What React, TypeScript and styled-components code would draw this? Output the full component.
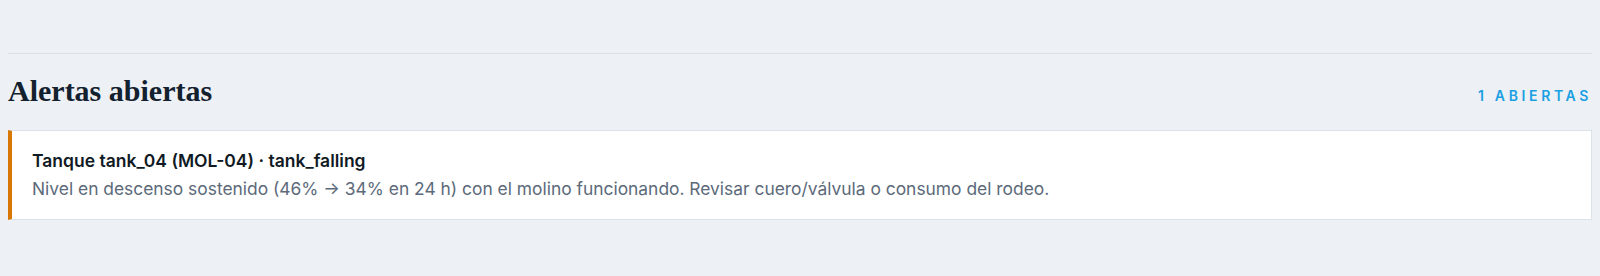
import React from "react";
import styled, { createGlobalStyle } from "styled-components";

const GlobalStyle = createGlobalStyle`
  html, body {
    margin: 0;
    padding: 0;
    background: #edf0f4;
  }
  body {
    font-family: Inter, "Noto Sans", sans-serif;
  }
`;

const Page = styled.div`
  padding: 0 8px;
`;

const Section = styled.section`
  margin-top: 53px;
  border-top: 1px solid #d9e0e7;
  padding-top: 18px;
`;

const Header = styled.div`
  display: flex;
  align-items: baseline;
  justify-content: space-between;
  margin-bottom: 20px;
`;

const Title = styled.h2`
  margin: 0;
  font-family: "Liberation Serif", "DejaVu Serif", serif;
  font-weight: 700;
  font-size: 30px;
  line-height: 38px;
  color: #13202e;
`;

const Count = styled.span`
  font-family: Inter, sans-serif;
  font-size: 14px;
  font-weight: 600;
  letter-spacing: 0.26em;
  color: #1a9fe3;
  text-transform: uppercase;
`;

const AlertList = styled.div`
  display: flex;
  flex-direction: column;
  gap: 10px;
`;

const AlertCard = styled.div<{ $accent: string }>`
  background: #ffffff;
  border: 1px solid #dbe2ea;
  border-left: 4px solid ${(p) => p.$accent};
  padding: 18px 20px;
`;

const AlertTitle = styled.div`
  font-size: 17.5px;
  font-weight: 600;
  line-height: 24px;
  color: #111a24;
`;

const AlertBody = styled.div`
  margin-top: 4px;
  font-size: 17.4px;
  line-height: 24px;
  color: #5c6a7a;
`;

const alerts = [
  {
    title: "Tanque tank_04 (MOL-04) · tank_falling",
    body:
      "Nivel en descenso sostenido (46% → 34% en 24 h) con el molino funcionando. Revisar cuero/válvula o consumo del rodeo.",
    accent: "#d97706",
  },
];

export default function App() {
  return (
    <Page>
      <GlobalStyle />
      <Section>
        <Header>
          <Title>Alertas abiertas</Title>
          <Count>{alerts.length} abiertas</Count>
        </Header>
        <AlertList>
          {alerts.map((a) => (
            <AlertCard key={a.title} $accent={a.accent}>
              <AlertTitle>{a.title}</AlertTitle>
              <AlertBody>{a.body}</AlertBody>
            </AlertCard>
          ))}
        </AlertList>
      </Section>
    </Page>
  );
}
